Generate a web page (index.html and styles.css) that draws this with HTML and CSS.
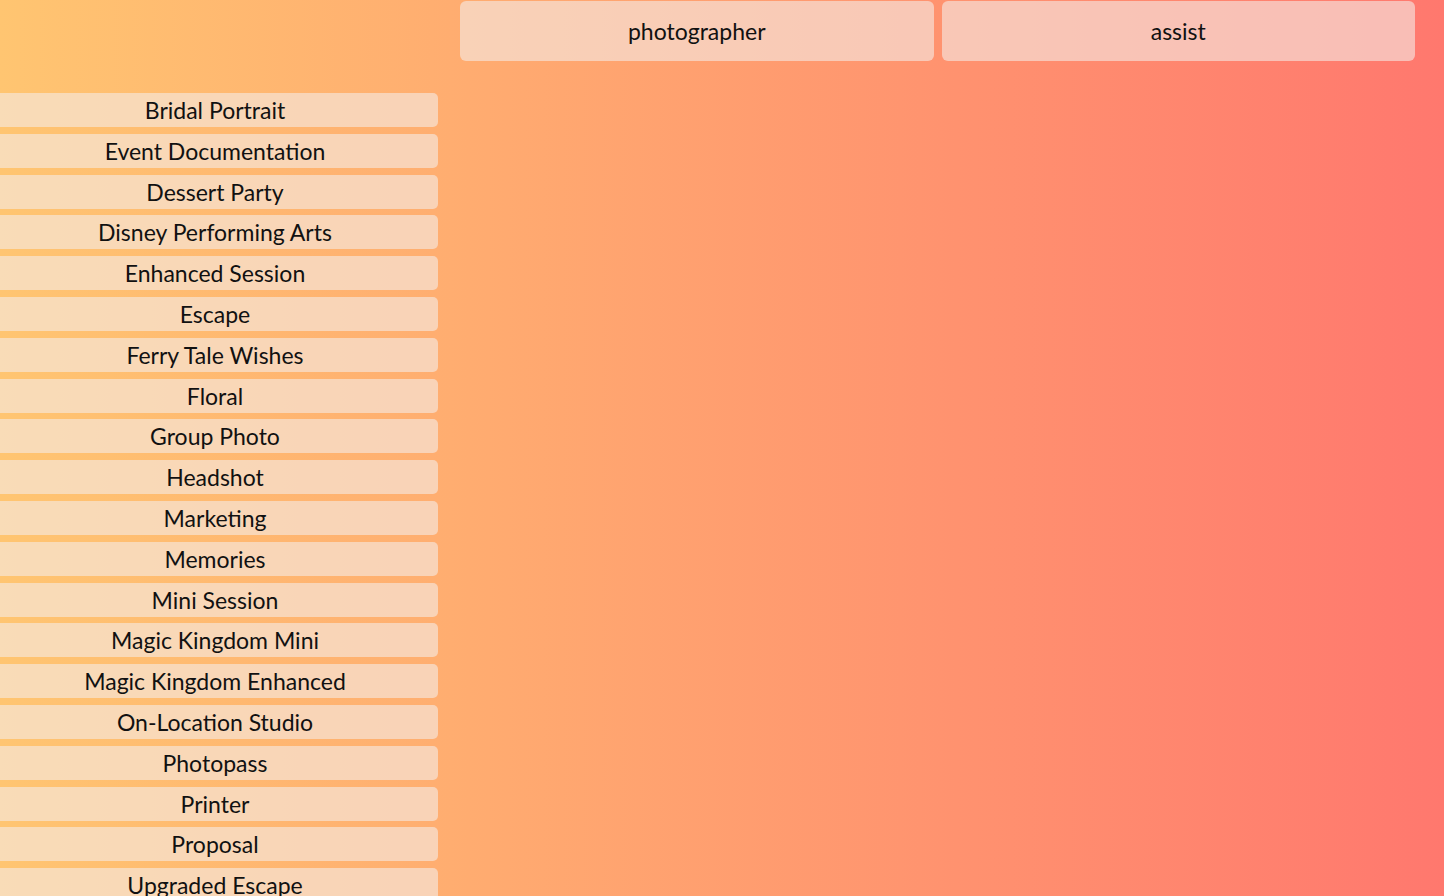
FILE: index.html
```html
<!DOCTYPE html>
<html>
<head>
<meta charset="utf-8">
<link rel="stylesheet" href="styles.css">
</head>
<body>
<div class="layout">
  <aside class="sidebar">
    <div class="item">Bridal Portrait</div>
    <div class="item">Event Documentation</div>
    <div class="item">Dessert Party</div>
    <div class="item">Disney Performing Arts</div>
    <div class="item">Enhanced Session</div>
    <div class="item">Escape</div>
    <div class="item">Ferry Tale Wishes</div>
    <div class="item">Floral</div>
    <div class="item">Group Photo</div>
    <div class="item">Headshot</div>
    <div class="item">Marketing</div>
    <div class="item">Memories</div>
    <div class="item">Mini Session</div>
    <div class="item">Magic Kingdom Mini</div>
    <div class="item">Magic Kingdom Enhanced</div>
    <div class="item">On-Location Studio</div>
    <div class="item">Photopass</div>
    <div class="item">Printer</div>
    <div class="item">Proposal</div>
    <div class="item">Upgraded Escape</div>
  </aside>
  <main class="main">
    <nav class="tabs">
      <div class="tab">photographer</div>
      <div class="tab">assist</div>
    </nav>
  </main>
</div>
</body>
</html>
```
FILE: styles.css
```css
html, body {
  margin: 0;
  padding: 0;
  height: 100%;
  overflow: hidden;
}
body {
  background: linear-gradient(to right, #ffc571, #ff786e);
  font-family: Lato, "Noto Sans", sans-serif;
  color: #111;
}
.layout {
  display: grid;
  grid-template-columns: 446px 1fr;
  column-gap: 22px;
  margin-left: -8px;
  padding-right: 29px;
}
.sidebar {
  padding-top: 93px;
  display: flex;
  flex-direction: column;
  gap: 6.8px;
}
.item {
  height: 34px;
  line-height: 34px;
  text-align: center;
  font-size: 23px;
  border-radius: 5px;
  background: rgba(245, 235, 230, 0.6);
}
.main {
  padding-top: 1px;
}
.tabs {
  display: flex;
  gap: 8px;
}
.tab {
  flex: 1;
  height: 60px;
  line-height: 60px;
  text-align: center;
  font-size: 23px;
  border-radius: 6px;
  background: rgba(245, 235, 230, 0.6);
}
```
